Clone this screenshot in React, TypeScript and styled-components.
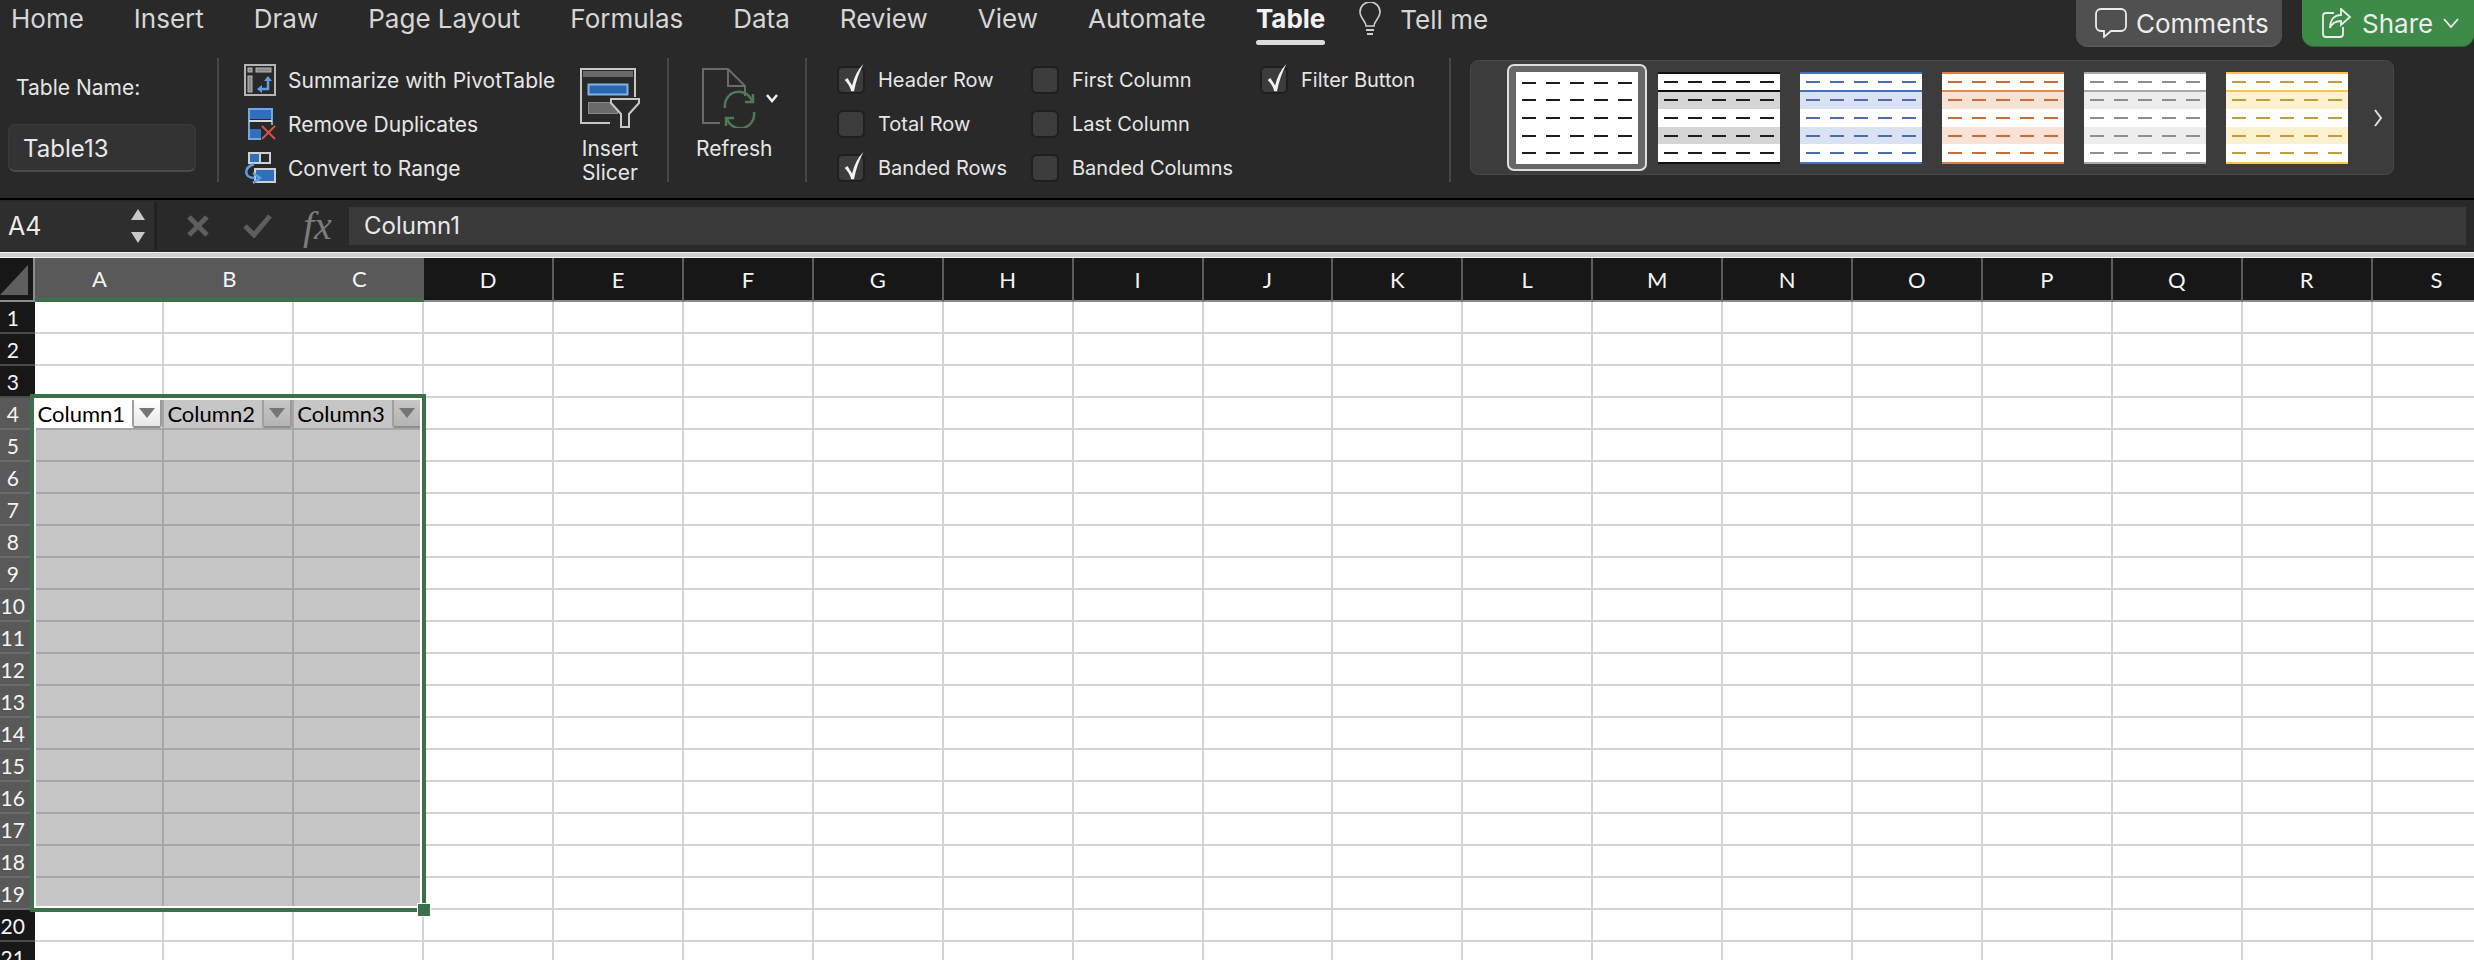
import React, { FC } from 'react';
import styled, { createGlobalStyle } from 'styled-components';

const UI_FONT = 'Inter, "Noto Sans", sans-serif';
const SHEET_FONT = 'Lato, "Open Sans", sans-serif';
const GREEN = '#3c7049';

const GlobalStyle = createGlobalStyle`
  html, body {
    margin: 0;
    padding: 0;
    background: #fff;
  }

  * {
    box-sizing: border-box;
  }
`;

const Page = styled.div`
  width: 2474px;
  height: 960px;
  overflow: hidden;
  display: flex;
  flex-direction: column;
  background: #292929;
  font-family: ${UI_FONT};
`;

const TabBar = styled.div`
  height: 50px;
  flex: none;
  display: flex;
  align-items: flex-start;
  gap: 50px;
  padding-left: 11px;
`;

const Tab = styled.div<{ $active?: boolean }>`
  position: relative;
  height: 38px;
  line-height: 38px;
  font-size: 26px;
  font-weight: ${(p) => (p.$active ? 700 : 400)};
  color: ${(p) => (p.$active ? '#f2f2f2' : '#d6d6d6')};
  white-space: nowrap;

  ${(p) => p.$active && `
    &::after {
      content: '';
      position: absolute;
      left: 0;
      right: 0;
      top: 40px;
      height: 5px;
      border-radius: 3px;
      background: #dcdcdc;
    }
  `}
`;

const TellMe = styled.div`
  display: flex;
  align-items: center;
  gap: 18px;
  height: 38px;
  margin-left: -17px;
  font-size: 26px;
  color: #d6d6d6;
  white-space: nowrap;
`;

const TopActions = styled.div`
  margin-left: auto;
  display: flex;
  gap: 20px;
`;

const TopButton = styled.div<{ $green?: boolean }>`
  height: 46px;
  display: flex;
  align-items: center;
  gap: ${(p) => (p.$green ? 10 : 9)}px;
  padding: 0 12px 0 ${(p) => (p.$green ? 20 : 19)}px;
  width: ${(p) => (p.$green ? 172 : 206)}px;
  border-radius: 0 0 12px 12px;
  background: ${(p) => (p.$green ? '#3e8a48' : '#505050')};
  box-shadow: 0 1px 0 ${(p) => (p.$green ? '#2f6a38' : '#5f5f5f')};
  font-size: 26px;
  color: #ececec;
  white-space: nowrap;
`;

const Ribbon = styled.div`
  height: 150px;
  flex: none;
  display: flex;
  align-items: flex-start;
  padding-top: 8px;
  border-bottom: 2px solid #000;
`;

const Separator = styled.div`
  width: 2px;
  height: 124px;
  flex: none;
  background: #474747;
`;

const TableNameGroup = styled.div`
  width: 217px;
  flex: none;
  padding-left: 8px;
`;

const FieldLabel = styled.div`
  margin: 10px 0 0 8px;
  height: 40px;
  line-height: 40px;
  font-size: 21px;
  color: #e4e4e4;
`;

const NameField = styled.div`
  width: 188px;
  height: 48px;
  margin-top: 16px;
  padding-left: 14px;
  line-height: 47px;
  font-size: 24px;
  color: #e8e8e8;
  background: #333;
  border: 1px solid #3a3a3a;
  border-bottom: 2px solid #4a4a4a;
  border-radius: 7px;
`;

const CommandGroup = styled.div`
  width: 448px;
  flex: none;
  display: flex;
  align-items: flex-start;
  padding-left: 25px;
`;

const CommandList = styled.div`
  width: 336px;
  flex: none;
`;

const CommandRow = styled.div`
  height: 44px;
  display: flex;
  align-items: center;
  gap: 12px;
  font-size: 21px;
  color: #e6e6e6;
  white-space: nowrap;
`;

const LargeButton = styled.div<{ $start?: boolean }>`
  display: flex;
  flex-direction: column;
  align-items: ${(p) => (p.$start ? 'flex-start' : 'center')};
  padding-top: 10px;
  gap: 9px;
`;

const LargeLabel = styled.div`
  line-height: 24px;
  font-size: 21px;
  text-align: center;
  color: #e6e6e6;
`;

const RefreshGroup = styled.div`
  width: 136px;
  flex: none;
  padding-left: 27px;
`;

const OptionsGroup = styled.div`
  width: 642px;
  flex: none;
  display: grid;
  grid-template-columns: 194px 229px 1fr;
  grid-auto-rows: 44px;
  padding-left: 30px;
`;

const OptionRow = styled.div`
  display: flex;
  align-items: center;
  gap: 13px;
  font-size: 20px;
  color: #e6e6e6;
  white-space: nowrap;
`;

const CheckBoxFrame = styled.div`
  position: relative;
  width: 28px;
  height: 28px;
  flex: none;
  border-radius: 6px;
  background: #3c3c3c;
  border: 2px solid #1f1f1f;
`;

const CheckMark = styled.svg`
  position: absolute;
  left: 3px;
  top: -5px;
`;

const Gallery = styled.div`
  width: 924px;
  height: 115px;
  flex: none;
  margin: 2px 0 0 19px;
  padding-left: 36px;
  display: flex;
  align-items: center;
  gap: 2px;
  background: #3c3c3c;
  border: 1px solid #474747;
  border-radius: 8px;
`;

const SwatchFrame = styled.div<{ $selected?: boolean }>`
  width: 140px;
  height: 107px;
  flex: none;
  padding: 6px 7px;
  border: 2px solid ${(p) => (p.$selected ? '#dedede' : 'transparent')};
  border-radius: 7px;
  background: ${(p) => (p.$selected ? '#676767' : 'transparent')};
`;

const Swatch = styled.div<{ $accent: string }>`
  width: 122px;
  height: 92px;
  display: grid;
  grid-template-rows: repeat(5, 1fr);
  background: #fff;
  border-top: 2px solid ${(p) => p.$accent};
  border-bottom: 2px solid ${(p) => p.$accent};
`;

const SwatchRow = styled.div<{ $band?: string; $rule?: string }>`
  display: flex;
  align-items: center;
  gap: 10px;
  padding-left: 6px;
  background: ${(p) => p.$band ?? 'transparent'};
  border-bottom: ${(p) => (p.$rule ? `2px solid ${p.$rule}` : 'none')};
`;

const Dash = styled.span<{ $color: string }>`
  width: 14px;
  height: 2px;
  background: ${(p) => p.$color};
`;

const GalleryMore = styled.svg`
  margin-left: 14px;
  flex: none;
`;

const FormulaBar = styled.div`
  height: 52px;
  flex: none;
  display: flex;
  align-items: center;
  background: #292929;
`;

const NameBox = styled.div`
  width: 157px;
  height: 48px;
  flex: none;
  display: flex;
  align-items: center;
  justify-content: space-between;
  padding: 0 8px;
  background: #2e2e2e;
  border-right: 3px solid #212121;
  font-size: 25px;
  color: #ececec;
`;

const FormulaIcons = styled.div`
  width: 192px;
  flex: none;
  display: flex;
  align-items: center;
  padding-left: 30px;
`;

const FxLabel = styled.span`
  margin-left: 30px;
  font-family: "Liberation Serif", serif;
  font-style: italic;
  font-size: 40px;
  line-height: 40px;
  color: #7c7c7c;
`;

const FormulaInput = styled.div`
  width: 2117px;
  height: 38px;
  flex: none;
  padding-left: 15px;
  line-height: 38px;
  font-size: 24px;
  color: #e8e8e8;
  background: #3a3a3a;
`;

const SheetDivider = styled.div`
  height: 6px;
  flex: none;
  background: #cfcfcf;
  border-top: 1px solid #f2f2f2;
  border-bottom: 1px solid #f2f2f2;
`;

const Sheet = styled.div`
  position: relative;
  flex: 1;
  overflow: hidden;
  display: grid;
  grid-template-columns: 34.5px repeat(19, 129.9px);
  grid-template-rows: 44px;
  grid-auto-rows: 32px;
  background: #fff;
  font-family: ${SHEET_FONT};
`;

const Corner = styled.div`
  background: #171717;
  border-right: 2px solid #8c8c8c;
  border-bottom: 2px solid #8c8c8c;
`;

const ColumnHead = styled.div<{ $selected?: boolean }>`
  display: flex;
  align-items: center;
  justify-content: center;
  font-size: 22px;
  color: #f4f4f4;
  background: ${(p) => (p.$selected ? '#595959' : '#171717')};
  border-right: ${(p) => (p.$selected ? 'none' : '2px solid #5c5c5c')};
  border-bottom: ${(p) => (p.$selected ? `4px solid ${GREEN}` : '2px solid #8c8c8c')};
`;

const RowHead = styled.div<{ $selected?: boolean }>`
  display: flex;
  align-items: center;
  justify-content: center;
  padding-right: 9px;
  font-size: 21px;
  color: #f4f4f4;
  background: ${(p) => (p.$selected ? '#595959' : '#171717')};
  border-bottom: 2px solid ${(p) => (p.$selected ? '#6a6a6a' : '#4a4a4a')};
  white-space: nowrap;
`;

const Cell = styled.div<{ $selected?: boolean; $white?: boolean }>`
  display: flex;
  align-items: center;
  justify-content: space-between;
  padding-left: 3px;
  overflow: hidden;
  font-size: 22px;
  color: #000;
  background: ${(p) => (p.$white ? '#fff' : p.$selected ? '#c6c6c6' : '#fff')};
  border-right: 2px solid ${(p) => (p.$selected ? '#a6a6a6' : '#d4d4d4')};
  border-bottom: 2px solid ${(p) => (p.$selected ? '#a6a6a6' : '#d4d4d4')};
`;

const FilterButton = styled.div<{ $light?: boolean }>`
  width: 30px;
  height: 28px;
  flex: none;
  display: flex;
  align-items: center;
  justify-content: center;
  margin: 2px 0 0;
  background: ${(p) => (p.$light
    ? 'linear-gradient(#fff, #e8e8e8)'
    : 'linear-gradient(#c6c6c6, #b4b4b4)')};
  border-left: 2px solid #a0a0a0;
  border-bottom: 2px solid #8e8e8e;
  border-right: 2px solid #9a9a9a;
  border-radius: 0 0 3px 3px;
`;

const FilterArrow = styled.span`
  width: 0;
  height: 0;
  border-left: 8px solid transparent;
  border-right: 8px solid transparent;
  border-top: 10px solid #757575;
`;

const SelectionBox = styled.div`
  position: absolute;
  left: 30px;
  top: 136px;
  width: 396px;
  height: 518px;
  border: 4px solid ${GREEN};
  pointer-events: none;

  &::before {
    content: '';
    position: absolute;
    inset: 0;
    border: 2px solid #fff;
  }
`;

const FillHandle = styled.div`
  position: absolute;
  left: 384px;
  top: 506px;
  width: 12px;
  height: 12px;
  background: ${GREEN};
  outline: 1px solid #fff;
`;

const SummarizeIcon: FC = () => (
  <svg width="32" height="32" viewBox="0 0 32 32" fill="none">
    <rect x="1" y="1" width="30" height="30" stroke="#b5b5b5" strokeWidth="2" />
    <rect x="4" y="4" width="4" height="4" fill="#8a8a8a" stroke="#b5b5b5" />
    <rect x="12" y="4" width="15" height="4" fill="#8a8a8a" stroke="#b5b5b5" />
    <rect x="4" y="12" width="4" height="16" fill="#8a8a8a" stroke="#b5b5b5" />
    <path d="M24 14v11h-9" stroke="#5ea1e0" strokeWidth="2.5" />
    <path d="M20 17l4-5 4 5zM18 21l-5 4 5 4z" fill="#5ea1e0" />
  </svg>
);

const RemoveIcon: FC = () => (
  <svg width="32" height="32" viewBox="0 0 32 32" fill="none">
    <rect x="5" y="1" width="23" height="30" stroke="#6ea9e0" strokeWidth="2" />
    <rect x="6" y="2" width="21" height="9" fill="#2f6fbd" />
    <rect x="6" y="21" width="14" height="9" fill="#2f6fbd" />
    <path d="M5 13h23" stroke="#d8d8d8" strokeWidth="2" />
    <rect x="17" y="17" width="15" height="15" fill="#292929" />
    <path d="M18 18l13 13M31 18L18 31" stroke="#d8524a" strokeWidth="2" />
  </svg>
);

const ConvertIcon: FC = () => (
  <svg width="32" height="32" viewBox="0 0 32 32" fill="none">
    <rect x="5" y="1" width="21" height="10" stroke="#d0d0d0" strokeWidth="2" />
    <rect x="6" y="2" width="10" height="8" fill="#2f6fbd" />
    <path d="M16 1v10" stroke="#d0d0d0" strokeWidth="2" />
    <rect x="11" y="17" width="20" height="13" fill="#2f6fbd" stroke="#d0d0d0" strokeWidth="2" />
    <path d="M10 12C-1 16 0 26 11 26" stroke="#5ea1e0" strokeWidth="2.5" />
    <path d="M9 21l7 5-7 5" stroke="#5ea1e0" strokeWidth="2.5" />
  </svg>
);

const SlicerIcon: FC = () => (
  <svg width="60" height="60" viewBox="0 0 60 60" fill="none">
    <path d="M30 55H1V1h54v28" stroke="#c8c8c8" strokeWidth="2" />
    <rect x="3" y="3" width="50" height="6" fill="#6a6a6a" />
    <rect x="8.5" y="16.5" width="39" height="10" fill="#2c66b0" stroke="#7fb4e6" strokeWidth="2" />
    <rect x="8.5" y="34.5" width="29" height="11" fill="#6a6a6a" stroke="#8a8a8a" />
    <path d="M31 31h28v4L49 46v13h-8V46L31 35z" fill="#292929" stroke="#c8c8c8" strokeWidth="2" />
  </svg>
);

const RefreshIcon: FC = () => (
  <svg width="84" height="60" viewBox="0 0 84 60" fill="none">
    <path d="M24 55H7V1h25l17 17v10M32 1v17h17" stroke="#6a6a6a" strokeWidth="2" />
    <path d="M29 40a14 14 0 0 1 27-7M58 44a14 14 0 0 1-27 7" stroke="#4f7a54" strokeWidth="2.5" />
    <path d="M49 34h8v-8M38 50h-8v8" stroke="#4f7a54" strokeWidth="2.5" />
    <path d="M71 27l5 6 5-6" stroke="#f0f0f0" strokeWidth="2.5" />
  </svg>
);

const BulbIcon: FC = () => (
  <svg width="24" height="34" viewBox="0 0 24 34" fill="none" stroke="#cfcfcf" strokeWidth="1.6">
    <path d="M8 24c0-5-6-8-6-14a10 10 0 0 1 20 0c0 6-6 9-6 14z" />
    <path d="M8 28h8M9 32h6" strokeWidth="2" />
  </svg>
);

const BubbleIcon: FC = () => (
  <svg width="32" height="30" viewBox="0 0 32 30" fill="none" stroke="#ececec" strokeWidth="1.8">
    <path d="M6 1h20a5 5 0 0 1 5 5v12a5 5 0 0 1-5 5H16l-7 6v-6H6a5 5 0 0 1-5-5V6a5 5 0 0 1 5-5z" />
  </svg>
);

const ShareIcon: FC = () => (
  <svg width="30" height="30" viewBox="0 0 30 30" fill="none" stroke="#ececec" strokeWidth="1.8">
    <path d="M12 5H4a3 3 0 0 0-3 3v18a3 3 0 0 0 3 3h14a3 3 0 0 0 3-3v-7" />
    <path d="M19 1l9 8-9 8v-4c-6 0-9 2-11 7 0-8 4-13 11-13z" />
  </svg>
);

const ChevronDown: FC = () => (
  <svg width="16" height="10" viewBox="0 0 16 10" fill="none" stroke="#ececec" strokeWidth="1.8">
    <path d="M1 1l7 8 7-8" />
  </svg>
);

const CellCorner: FC = () => (
  <svg width="32" height="42" viewBox="0 0 32 42">
    <polygon points="0,37 28,7 28,37" fill="#5f5f5f" />
  </svg>
);

const NameBoxSpinner: FC = () => (
  <svg width="16" height="36" viewBox="0 0 16 36">
    <polygon points="8,1 15,12 1,12" fill="#c8c8c8" />
    <polygon points="8,35 15,24 1,24" fill="#c8c8c8" />
  </svg>
);

const CancelIcon: FC = () => (
  <svg width="22" height="22" viewBox="0 0 22 22" fill="none" stroke="#5e5e5e" strokeWidth="5">
    <path d="M2 2l18 18M20 2L2 20" />
  </svg>
);

const ConfirmIcon: FC = () => (
  <svg width="30" height="24" viewBox="0 0 30 24" fill="none" stroke="#5e5e5e" strokeWidth="5" style={{ marginLeft: 34 }}>
    <path d="M2 12l9 9L27 2" />
  </svg>
);

const CheckBox: FC<{ checked?: boolean }> = ({ checked }) => (
  <CheckBoxFrame>
    {checked && (
      <CheckMark width="24" height="30" viewBox="0 0 22 32" fill="#f2f2f2">
        <path d="M1 18l3-2 5 8C11 15 15 7 21 1c-4 8-8 18-10 29H8C7 25 4 21 1 18z" />
      </CheckMark>
    )}
  </CheckBoxFrame>
);

const TableSwatch: FC<{ accent?: string; band?: string; dash: string; rule?: string }> = ({
  accent = 'transparent', band, dash, rule,
}) => (
  <Swatch $accent={accent}>
    {[0, 1, 2, 3, 4].map((row) => (
      <SwatchRow key={row} $band={row % 2 === 1 ? band : undefined} $rule={row === 0 ? rule : undefined}>
        {[0, 1, 2, 3, 4].map((i) => <Dash key={i} $color={dash} />)}
      </SwatchRow>
    ))}
  </Swatch>
);

const STYLES = [
  { dash: '#1d1d1d' },
  { accent: '#111', rule: '#111', band: '#d5d5d5', dash: '#1d1d1d' },
  { accent: '#4472c4', rule: '#4472c4', band: '#d9e1f2', dash: '#4a6bb0' },
  { accent: '#dd7f42', rule: '#e08a50', band: '#f8e2d6', dash: '#c56e38' },
  { accent: '#a8a8a8', rule: '#a8a8a8', band: '#ededed', dash: '#8e8e8e' },
  { accent: '#f6c545', rule: '#f6c545', band: '#fdf2cf', dash: '#c29c3c' },
];

const COLUMNS = 'ABCDEFGHIJKLMNOPQRS'.split('');
const ROWS = Array.from({ length: 21 }, (_, i) => i + 1);
const isSelected = (col: number, row: number) => col < 3 && row >= 4 && row <= 19;

const App: FC = () => (
  <Page>
    <GlobalStyle />
    <TabBar>
      <Tab>Home</Tab>
      <Tab>Insert</Tab>
      <Tab>Draw</Tab>
      <Tab>Page Layout</Tab>
      <Tab>Formulas</Tab>
      <Tab>Data</Tab>
      <Tab>Review</Tab>
      <Tab>View</Tab>
      <Tab>Automate</Tab>
      <Tab $active>Table</Tab>
      <TellMe>
        <BulbIcon />
        Tell me
      </TellMe>
      <TopActions>
        <TopButton>
          <BubbleIcon />
          Comments
        </TopButton>
        <TopButton $green>
          <ShareIcon />
          Share
          <ChevronDown />
        </TopButton>
      </TopActions>
    </TabBar>

    <Ribbon>
      <TableNameGroup>
        <FieldLabel>Table Name:</FieldLabel>
        <NameField>Table13</NameField>
      </TableNameGroup>
      <Separator />
      <CommandGroup>
        <CommandList>
          <CommandRow>
            <SummarizeIcon />
            Summarize with PivotTable
          </CommandRow>
          <CommandRow>
            <RemoveIcon />
            Remove Duplicates
          </CommandRow>
          <CommandRow>
            <ConvertIcon />
            Convert to Range
          </CommandRow>
        </CommandList>
        <LargeButton>
          <SlicerIcon />
          <LargeLabel>
            Insert
            <br />
            Slicer
          </LargeLabel>
        </LargeButton>
      </CommandGroup>
      <Separator />
      <RefreshGroup>
        <LargeButton $start>
          <RefreshIcon />
          <LargeLabel>Refresh</LargeLabel>
        </LargeButton>
      </RefreshGroup>
      <Separator />
      <OptionsGroup>
        <OptionRow>
          <CheckBox checked />
          Header Row
        </OptionRow>
        <OptionRow>
          <CheckBox />
          First Column
        </OptionRow>
        <OptionRow>
          <CheckBox checked />
          Filter Button
        </OptionRow>
        <OptionRow>
          <CheckBox />
          Total Row
        </OptionRow>
        <OptionRow>
          <CheckBox />
          Last Column
        </OptionRow>
        <div />
        <OptionRow>
          <CheckBox checked />
          Banded Rows
        </OptionRow>
        <OptionRow>
          <CheckBox />
          Banded Columns
        </OptionRow>
      </OptionsGroup>
      <Separator />
      <Gallery>
        {STYLES.map((style, i) => (
          <SwatchFrame key={style.dash + i} $selected={i === 0}>
            <TableSwatch {...style} />
          </SwatchFrame>
        ))}
        <GalleryMore width="10" height="18" viewBox="0 0 10 18" fill="none" stroke="#e0e0e0" strokeWidth="2">
          <path d="M2 1l6 8-6 8" />
        </GalleryMore>
      </Gallery>
    </Ribbon>

    <FormulaBar>
      <NameBox>
        A4
        <NameBoxSpinner />
      </NameBox>
      <FormulaIcons>
        <CancelIcon />
        <ConfirmIcon />
        <FxLabel>fx</FxLabel>
      </FormulaIcons>
      <FormulaInput>Column1</FormulaInput>
    </FormulaBar>
    <SheetDivider />

    <Sheet>
      <Corner>
        <CellCorner />
      </Corner>
      {COLUMNS.map((col, i) => (
        <ColumnHead key={col} $selected={i < 3}>{col}</ColumnHead>
      ))}
      {ROWS.map((row) => (
        <React.Fragment key={row}>
          <RowHead $selected={row >= 4 && row <= 19}>{row}</RowHead>
          {COLUMNS.map((col, i) => {
            const header = row === 4 && i < 3;
            return (
              <Cell key={col} $selected={isSelected(i, row)} $white={row === 4 && i === 0}>
                {header && `Column${i + 1}`}
                {header && (
                  <FilterButton $light={i === 0}>
                    <FilterArrow />
                  </FilterButton>
                )}
              </Cell>
            );
          })}
        </React.Fragment>
      ))}
      <SelectionBox>
        <FillHandle />
      </SelectionBox>
    </Sheet>
  </Page>
);

export default App;
